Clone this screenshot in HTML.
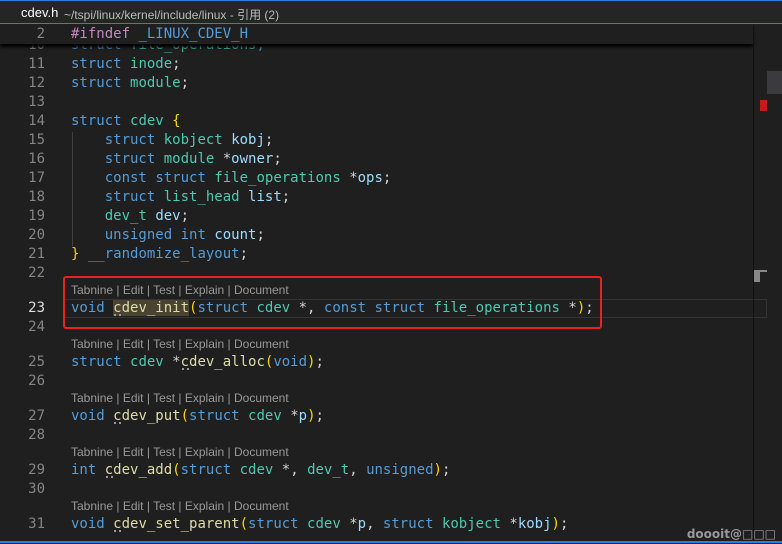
<!DOCTYPE html>
<html><head><meta charset="utf-8"><style>
*{margin:0;padding:0;box-sizing:border-box}
body{width:782px;height:544px;background:#1f1f1f;overflow:hidden;position:relative;font-family:"DejaVu Sans Mono","Liberation Mono",monospace;font-size:14px;color:#d4d4d4}
.tb{position:absolute;left:0;top:0;width:782px;height:24px;background:#252526;border-top:1px solid #2b7fe0;border-bottom:1px solid #2b7fe0}
.tb .n{position:absolute;left:21px;top:4px;font-family:"Liberation Sans","Noto Sans CJK SC",sans-serif;font-size:13px;color:#fff}
.tb .p{position:absolute;left:64px;top:5px;font-family:"Liberation Sans","Noto Sans CJK SC",sans-serif;font-size:12px;color:#bbb}
.ln{position:absolute;width:45px;text-align:right;color:#858585;height:19px;line-height:19px}
.c{position:absolute;left:71px;white-space:pre;height:19px;line-height:19px}
.lens{position:absolute;left:71px;font-family:"Liberation Sans",sans-serif;font-size:12px;color:#999;height:16px;line-height:16px;white-space:pre}
.k{color:#569cd6}.t{color:#4ec9b0}.v{color:#9cdcfe}.f{color:#dcdcaa}.y{color:#ffd700}.m{color:#c586c0}
.u{position:relative}
.u::after{content:"";position:absolute;left:1px;bottom:0;width:7px;border-bottom:2px dotted #999}
</style></head><body>
<div class="tb"><span class="n">cdev.h</span><span class="p">~/tspi/linux/kernel/include/linux - 引用 (2)</span></div>
<div class="c" style="top:36px;color:#569cd6;opacity:.8">struct <span class="t">file_operations</span><span class="d">;</span></div>
<div class="ln" style="top:36px">10</div>
<div style="position:absolute;left:0;top:25px;width:753px;height:19px;background:#1f1f1f;box-shadow:0 3px 3px #000"></div>
<div class="ln" style="top:25px">2</div>
<div class="c" style="top:25px"><span class="m">#ifndef</span> <span class="k">_LINUX_CDEV_H</span></div>

<div class="ln" style="top:55px">11</div><div class="c" style="top:55px"><span class="k">struct</span> <span class="t">inode</span>;</div>
<div class="ln" style="top:74px">12</div><div class="c" style="top:74px"><span class="k">struct</span> <span class="t">module</span>;</div>
<div class="ln" style="top:93px">13</div>
<div class="ln" style="top:112px">14</div><div class="c" style="top:112px"><span class="k">struct</span> <span class="t">cdev</span> <span class="y">{</span></div>
<div style="position:absolute;left:72px;top:132px;width:1px;height:114px;background:#404040"></div>
<div class="ln" style="top:131px">15</div><div class="c" style="top:131px">    <span class="k">struct</span> <span class="t">kobject</span> <span class="v">kobj</span>;</div>
<div class="ln" style="top:150px">16</div><div class="c" style="top:150px">    <span class="k">struct</span> <span class="t">module</span> *<span class="v">owner</span>;</div>
<div class="ln" style="top:169px">17</div><div class="c" style="top:169px">    <span class="k">const</span> <span class="k">struct</span> <span class="t">file_operations</span> *<span class="v">ops</span>;</div>
<div class="ln" style="top:188px">18</div><div class="c" style="top:188px">    <span class="k">struct</span> <span class="t">list_head</span> <span class="v">list</span>;</div>
<div class="ln" style="top:207px">19</div><div class="c" style="top:207px">    <span class="t">dev_t</span> <span class="v">dev</span>;</div>
<div class="ln" style="top:226px">20</div><div class="c" style="top:226px">    <span class="k">unsigned</span> <span class="k">int</span> <span class="v">count</span>;</div>
<div class="ln" style="top:245px">21</div><div class="c" style="top:245px"><span class="y">}</span> <span class="k">__randomize_layout</span>;</div>
<div class="ln" style="top:264px">22</div>

<div style="position:absolute;left:63px;top:299px;width:704px;height:19px;border:1px solid #333"></div>
<div class="lens" style="top:282px">Tabnine | Edit | Test | Explain | Document</div>
<div class="ln" style="top:299px;color:#ddd">23</div><div class="c" style="top:299px"><span class="k">void</span> <span class="f u" style="background:#4a4330">cdev_init</span><span class="y">(</span><span class="k">struct</span> <span class="t">cdev</span> *, <span class="k">const</span> <span class="k">struct</span> <span class="t">file_operations</span> *<span class="y">)</span>;</div>
<div class="ln" style="top:318px">24</div>
<div style="position:absolute;left:63px;top:276px;width:539px;height:53px;border:2px solid #e8231f;border-radius:3px"></div>

<div class="lens" style="top:336px">Tabnine | Edit | Test | Explain | Document</div>
<div class="ln" style="top:353px">25</div><div class="c" style="top:353px"><span class="k">struct</span> <span class="t">cdev</span> *<span class="f u">cdev_alloc</span><span class="y">(</span><span class="k">void</span><span class="y">)</span>;</div>
<div class="ln" style="top:372px">26</div>
<div class="lens" style="top:390px">Tabnine | Edit | Test | Explain | Document</div>
<div class="ln" style="top:407px">27</div><div class="c" style="top:407px"><span class="k">void</span> <span class="f u">cdev_put</span><span class="y">(</span><span class="k">struct</span> <span class="t">cdev</span> *<span class="v">p</span><span class="y">)</span>;</div>
<div class="ln" style="top:426px">28</div>
<div class="lens" style="top:444px">Tabnine | Edit | Test | Explain | Document</div>
<div class="ln" style="top:461px">29</div><div class="c" style="top:461px"><span class="k">int</span> <span class="f u">cdev_add</span><span class="y">(</span><span class="k">struct</span> <span class="t">cdev</span> *, <span class="t">dev_t</span>, <span class="k">unsigned</span><span class="y">)</span>;</div>
<div class="ln" style="top:480px">30</div>
<div class="lens" style="top:498px">Tabnine | Edit | Test | Explain | Document</div>
<div class="ln" style="top:515px">31</div><div class="c" style="top:515px"><span class="k">void</span> <span class="f u">cdev_set_parent</span><span class="y">(</span><span class="k">struct</span> <span class="t">cdev</span> *<span class="v">p</span>, <span class="k">struct</span> <span class="t">kobject</span> *<span class="v">kobj</span><span class="y">)</span>;</div>

<div style="position:absolute;left:753px;top:25px;width:1px;height:516px;background:#111"></div>
<div style="position:absolute;left:767px;top:71px;width:15px;height:23px;background:#3a3a3f"></div>
<div style="position:absolute;left:760px;top:100px;width:7px;height:11px;background:#c41b1b"></div>
<div style="position:absolute;left:754px;top:270px;width:13px;height:2px;background:#888"></div>
<div style="position:absolute;left:754px;top:270px;width:6px;height:12px;background:#888"></div>
<div style="position:absolute;right:6px;top:527px;font-family:'DejaVu Sans','Noto Sans CJK SC',sans-serif;font-size:12px;font-weight:bold;color:#999">doooit@□□□</div>
<div style="position:absolute;left:0;top:541px;width:782px;height:2px;background:#2b7fe0"></div>
</body></html>
